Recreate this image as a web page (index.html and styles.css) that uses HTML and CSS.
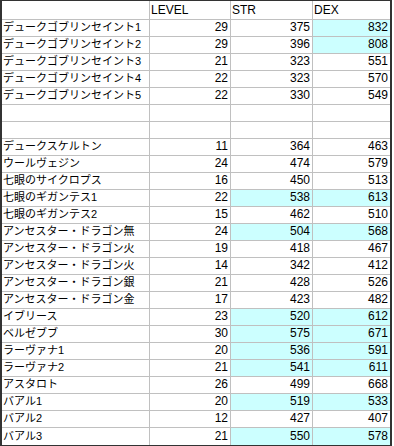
FILE: index.html
```html
<!DOCTYPE html>
<html lang="ja">
<head>
<meta charset="utf-8">
<title>sheet</title>
<link rel="stylesheet" href="styles.css">
</head>
<body>
<div class="sheet">
  <div class="row head"><div class="c name"></div><div class="c h">LEVEL</div><div class="c h">STR</div><div class="c h last">DEX</div></div>
  <div class="row"><div class="c name">デュークゴブリンセイント1</div><div class="c n">29</div><div class="c n">375</div><div class="c n last hl">832</div></div>
  <div class="row"><div class="c name">デュークゴブリンセイント2</div><div class="c n">29</div><div class="c n">396</div><div class="c n last hl">808</div></div>
  <div class="row"><div class="c name">デュークゴブリンセイント3</div><div class="c n">21</div><div class="c n">323</div><div class="c n last">551</div></div>
  <div class="row"><div class="c name">デュークゴブリンセイント4</div><div class="c n">22</div><div class="c n">323</div><div class="c n last">570</div></div>
  <div class="row"><div class="c name">デュークゴブリンセイント5</div><div class="c n">22</div><div class="c n">330</div><div class="c n last">549</div></div>
  <div class="row"><div class="c name"></div><div class="c n"></div><div class="c n"></div><div class="c n last"></div></div>
  <div class="row"><div class="c name"></div><div class="c n"></div><div class="c n"></div><div class="c n last"></div></div>
  <div class="row"><div class="c name">デュークスケルトン</div><div class="c n">11</div><div class="c n">364</div><div class="c n last">463</div></div>
  <div class="row"><div class="c name">ウールヴェジン</div><div class="c n">24</div><div class="c n">474</div><div class="c n last">579</div></div>
  <div class="row"><div class="c name">七眼のサイクロプス</div><div class="c n">16</div><div class="c n">450</div><div class="c n last">513</div></div>
  <div class="row"><div class="c name">七眼のギガンテス1</div><div class="c n">22</div><div class="c n hl">538</div><div class="c n last hl">613</div></div>
  <div class="row"><div class="c name">七眼のギガンテス2</div><div class="c n">15</div><div class="c n">462</div><div class="c n last">510</div></div>
  <div class="row"><div class="c name">アンセスター・ドラゴン無</div><div class="c n">24</div><div class="c n hl">504</div><div class="c n last hl">568</div></div>
  <div class="row"><div class="c name">アンセスター・ドラゴン火</div><div class="c n">19</div><div class="c n">418</div><div class="c n last">467</div></div>
  <div class="row"><div class="c name">アンセスター・ドラゴン火</div><div class="c n">14</div><div class="c n">342</div><div class="c n last">412</div></div>
  <div class="row"><div class="c name">アンセスター・ドラゴン銀</div><div class="c n">21</div><div class="c n">428</div><div class="c n last">526</div></div>
  <div class="row"><div class="c name">アンセスター・ドラゴン金</div><div class="c n">17</div><div class="c n">423</div><div class="c n last">482</div></div>
  <div class="row"><div class="c name">イブリース</div><div class="c n">23</div><div class="c n hl">520</div><div class="c n last hl">612</div></div>
  <div class="row"><div class="c name">ベルゼブブ</div><div class="c n">30</div><div class="c n hl">575</div><div class="c n last hl">671</div></div>
  <div class="row"><div class="c name">ラーヴァナ1</div><div class="c n">20</div><div class="c n hl">536</div><div class="c n last hl">591</div></div>
  <div class="row"><div class="c name">ラーヴァナ2</div><div class="c n">21</div><div class="c n hl">541</div><div class="c n last hl">611</div></div>
  <div class="row"><div class="c name">アスタロト</div><div class="c n">26</div><div class="c n">499</div><div class="c n last">668</div></div>
  <div class="row"><div class="c name">バアル1</div><div class="c n">20</div><div class="c n hl">519</div><div class="c n last hl">533</div></div>
  <div class="row"><div class="c name">バアル2</div><div class="c n">12</div><div class="c n">427</div><div class="c n last">407</div></div>
  <div class="row end"><div class="c name">バアル3</div><div class="c n">21</div><div class="c n hl">550</div><div class="c n last hl">578</div></div>
</div>
</body>
</html>
```
FILE: styles.css
```css
html, body {
  margin: 0;
  padding: 0;
  background: #ffffff;
}

body {
  font-family: "Liberation Sans", "Noto Sans CJK JP", sans-serif;
  color: #000000;
}

.sheet {
  width: 392px;
  box-sizing: border-box;
  border-top: 1px solid #333333;
  border-left: 2px solid #333333;
  border-right: 2px solid #333333;
  border-bottom: 2px solid #333333;
}

.row {
  display: grid;
  grid-template-columns: 148px 81px 82px 77px;
  height: 17px;
}

.row.head {
  height: 19px;
}

.c {
  box-sizing: border-box;
  border-right: 1px solid #c0c0c0;
  border-bottom: 1px solid #c0c0c0;
  display: flex;
  align-items: flex-end;
  white-space: nowrap;
  overflow: hidden;
  padding: 0 1px 1px 1px;
}

.c.last {
  border-right: none;
}

.row.end .c {
  border-bottom: none;
}

.name {
  font-size: 11px;
  line-height: 15px;
  letter-spacing: 0;
}

.h {
  font-size: 12px;
  line-height: 15px;
  align-items: center;
  padding-bottom: 0;
}

.n {
  justify-content: flex-end;
  font-size: 12px;
  line-height: 14px;
  padding-right: 2px;
  padding-bottom: 2px;
}

.hl {
  background: #ccffff;
}
```
